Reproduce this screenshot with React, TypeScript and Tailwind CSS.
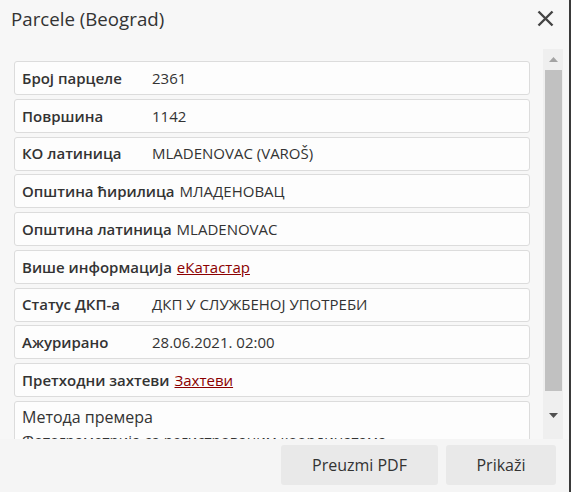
import React from "react";

type Row = {
    label: string;
    value: string;
    link?: boolean;
};

const rows: Row[] = [
    { label: "Број парцеле", value: "2361" },
    { label: "Површина", value: "1142" },
    { label: "КО латиница", value: "MLADENOVAC (VAROŠ)" },
    { label: "Општина ћирилица", value: "МЛАДЕНОВАЦ" },
    { label: "Општина латиница", value: "MLADENOVAC" },
    { label: "Више информација", value: "еКатастар", link: true },
    { label: "Статус ДКП-а", value: "ДКП У СЛУЖБЕНОЈ УПОТРЕБИ" },
    { label: "Ажурирано", value: "28.06.2021. 02:00" },
    { label: "Претходни захтеви", value: "Захтеви", link: true },
];

const font = { fontFamily: '"Open Sans", "Noto Sans", sans-serif' };

export default function App() {
    return (
        <div className="flex w-[571px] h-[492px] text-[#333]" style={font}>
            <div className="w-[569px] flex flex-col bg-[#f7f7f7]">
                {/* header */}
                <div className="h-[49px] shrink-0 flex justify-between">
                    <div className="pl-[11px] pt-[7px] text-[18.7px] leading-[24px]">Parcele (Beograd)</div>
                    <button className="mr-[15px] mt-[10px] w-[17px] h-[17px] flex items-start justify-center">
                        <svg width="17" height="17" viewBox="0 0 17 17">
                            <path d="M1.5 1.5 L15.5 15.5 M15.5 1.5 L1.5 15.5" stroke="#444" strokeWidth="2.4" fill="none" />
                        </svg>
                    </button>
                </div>

                {/* body */}
                <div className="h-[390px] shrink-0 flex">
                    <div className="flex-1 overflow-hidden pl-[14px] pr-[13px] pt-[12px] flex flex-col gap-[3.75px]">
                        {rows.map((r) => (
                            <div
                                key={r.label}
                                className="h-[34px] shrink-0 flex items-center pl-[7px] bg-[#fdfdfd] border border-[#dcdcdc] rounded-[3px] text-[15px]"
                            >
                                <span className="min-w-[125px] mr-[5px] font-semibold whitespace-nowrap">{r.label}</span>
                                {r.link ? (
                                    <a href="#" className="text-[#8b0000] underline">{r.value}</a>
                                ) : (
                                    <span className="whitespace-nowrap">{r.value}</span>
                                )}
                            </div>
                        ))}
                        <div className="shrink-0 pl-[7px] pt-[3px] pb-[6px] bg-[#fdfdfd] border border-[#dcdcdc] rounded-[3px]">
                            <div className="text-[16px] leading-[24px]">Метода премера</div>
                            <div className="text-[15px] leading-[20px] mt-[1px] whitespace-nowrap">Фотограметрија са регистрованим координатама</div>
                        </div>
                    </div>

                    {/* scrollbar */}
                    <div className="w-[20px] mr-[6px] bg-[#efefef] flex flex-col items-start">
                        <div className="h-[21px] w-full flex items-center justify-center">
                            <svg width="9" height="5" viewBox="0 0 9 5">
                                <path d="M0 5 L4.5 0 L9 5 Z" fill="#a3a3a3" />
                            </svg>
                        </div>
                        <div className="ml-[2px] w-[17px] h-[321px] bg-[#c1c1c1]" />
                        <div className="flex-1 w-full flex items-center justify-center">
                            <svg width="9" height="5" viewBox="0 0 9 5">
                                <path d="M0 0 L9 0 L4.5 5 Z" fill="#505050" />
                            </svg>
                        </div>
                    </div>
                </div>

                {/* footer */}
                <div className="flex-1 flex justify-end gap-[8px] pt-[6px] pr-[13px] bg-[#f5f5f5]">
                    <button className="w-[157px] h-[40px] rounded-[3px] bg-[#e9e9e9] text-[16px]">Preuzmi PDF</button>
                    <button className="w-[110px] h-[40px] rounded-[3px] bg-[#e9e9e9] text-[16px]">Prikaži</button>
                </div>
            </div>
            <div className="w-[2px] bg-[#3a3a3a]" />
        </div>
    );
}
